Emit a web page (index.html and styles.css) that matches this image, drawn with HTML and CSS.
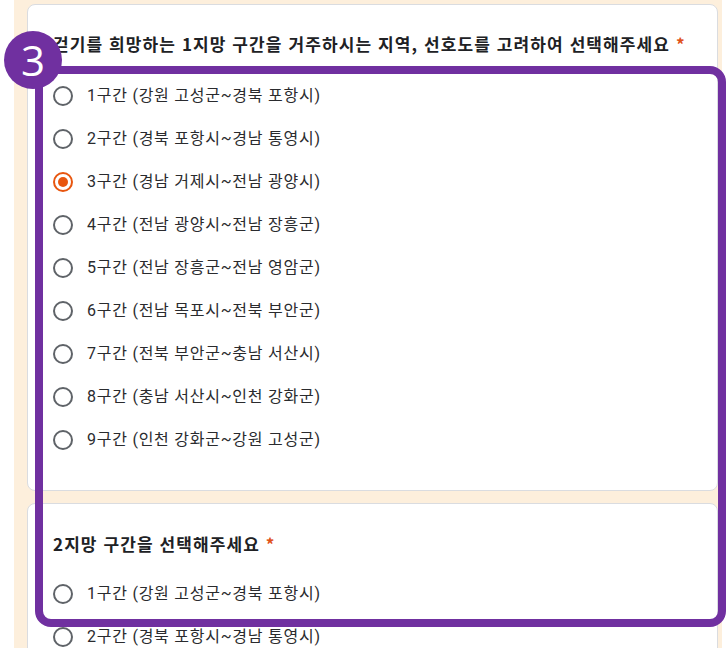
FILE: index.html
```html
<!DOCTYPE html>
<html lang="ko">
<head>
<meta charset="utf-8">
<link rel="stylesheet" href="styles.css">
</head>
<body>
<div class="page">
  <div class="card card-first">
    <div class="title">걷기를 희망하는 1지망 구간을 거주하시는 지역, 선호도를 고려하여 선택해주세요 <span class="req">*</span></div>
    <div class="options">
      <div class="opt"><span class="radio"></span><span class="label">1구간 (강원 고성군~경북 포항시)</span></div>
      <div class="opt"><span class="radio"></span><span class="label">2구간 (경북 포항시~경남 통영시)</span></div>
      <div class="opt"><span class="radio checked"></span><span class="label">3구간 (경남 거제시~전남 광양시)</span></div>
      <div class="opt"><span class="radio"></span><span class="label">4구간 (전남 광양시~전남 장흥군)</span></div>
      <div class="opt"><span class="radio"></span><span class="label">5구간 (전남 장흥군~전남 영암군)</span></div>
      <div class="opt"><span class="radio"></span><span class="label">6구간 (전남 목포시~전북 부안군)</span></div>
      <div class="opt"><span class="radio"></span><span class="label">7구간 (전북 부안군~충남 서산시)</span></div>
      <div class="opt"><span class="radio"></span><span class="label">8구간 (충남 서산시~인천 강화군)</span></div>
      <div class="opt"><span class="radio"></span><span class="label">9구간 (인천 강화군~강원 고성군)</span></div>
    </div>
  </div>
  <div class="card card-second">
    <div class="title">2지망 구간을 선택해주세요 <span class="req">*</span></div>
    <div class="options">
      <div class="opt"><span class="radio"></span><span class="label">1구간 (강원 고성군~경북 포항시)</span></div>
      <div class="opt"><span class="radio"></span><span class="label">2구간 (경북 포항시~경남 통영시)</span></div>
    </div>
  </div>
</div>
<div class="frame"></div>
<div class="badge">3</div>
</body>
</html>
```

FILE: styles.css
```css
html, body {
  margin: 0;
  padding: 0;
  background: #ffffff;
  height: 648px;
  overflow: hidden;
}
body {
  font-family: Roboto, "Noto Sans CJK KR", sans-serif;
  color: #202124;
}
.page {
  margin-left: 14px;
  width: 708px;
  height: 648px;
  overflow: hidden;
  background: #fdefdc;
  padding: 4px 4px 0 13px;
  box-sizing: border-box;
  display: flex;
  flex-direction: column;
  gap: 12px;
}
.card {
  background: #ffffff;
  border: 1px solid #dadce0;
  border-radius: 8px;
  padding: 0 16px 0 25px;
  flex-shrink: 0;
}
.card-first {
  height: 487px;
  box-sizing: border-box;
  padding-top: 28px;
}
.card-second {
  padding-top: 29px;
  height: 200px;
}
.title {
  font-family: "Noto Sans CJK KR", sans-serif;
  font-weight: 700;
  font-size: 17px;
  line-height: 22px;
  letter-spacing: 1.1px;
  white-space: nowrap;
}
.req {
  color: #e0521a;
}
.options {
  display: flex;
  flex-direction: column;
  padding-top: 19px;
}
.card-second .options {
  padding-top: 17px;
}
.opt {
  display: flex;
  align-items: center;
  height: 43.1px;
  gap: 14px;
}
.radio {
  width: 20px;
  height: 20px;
  box-sizing: border-box;
  border: 2px solid #5f6368;
  border-radius: 50%;
  flex-shrink: 0;
  display: flex;
  align-items: center;
  justify-content: center;
}
.radio.checked {
  border-color: #e8560f;
}
.radio.checked::after {
  content: "";
  width: 10px;
  height: 10px;
  border-radius: 50%;
  background: #e8560f;
}
.label {
  font-size: 16px;
  line-height: 20px;
  letter-spacing: 0.75px;
  color: #2a2b2e;
}
.frame {
  position: absolute;
  left: 35px;
  top: 66px;
  width: 691px;
  height: 561px;
  box-sizing: border-box;
  border: 8px solid #7030a0;
  border-radius: 16px;
}
.badge {
  position: absolute;
  left: 4px;
  top: 31px;
  width: 58px;
  height: 58px;
  border-radius: 50%;
  background: #7030a0;
  color: #ffffff;
  font-family: "Open Sans", sans-serif;
  font-size: 42px;
  line-height: 58px;
  text-align: center;
}
```
